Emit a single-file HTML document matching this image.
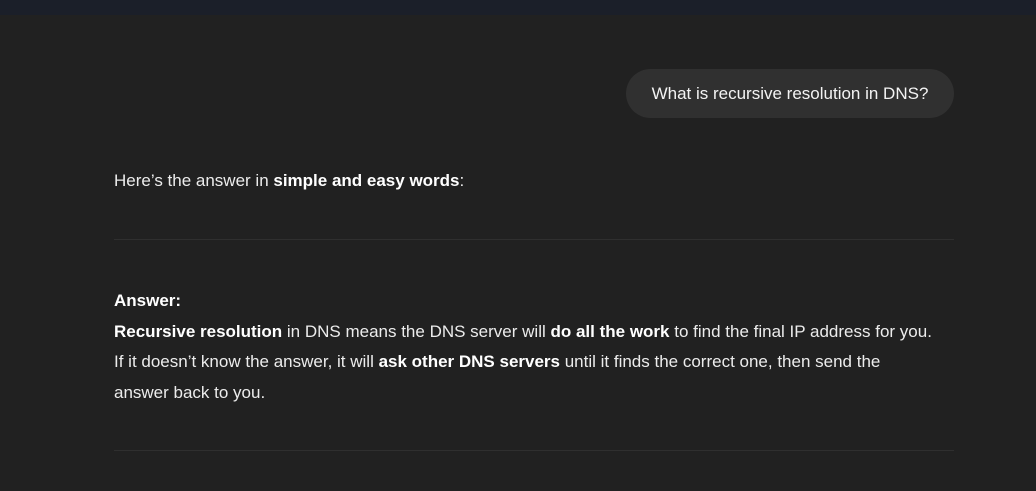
<!DOCTYPE html>
<html><head><style>
html,body{margin:0;padding:0;background:#212121;width:1036px;height:491px;overflow:hidden;font-family:"Liberation Sans",sans-serif;color:#ececec;}
.top{position:absolute;left:0;top:0;width:1036px;height:15px;background:#1b1f29;}
.bub{position:absolute;left:626px;top:69px;width:328px;height:49px;border-radius:25px;background:#303030;font-size:17px;line-height:49px;text-align:center;color:#f3f3f3;}
.t{position:absolute;left:114px;font-size:17px;white-space:nowrap;}
.hr{position:absolute;left:114px;width:840px;height:1px;background:#2f2f2f;}
b{font-weight:bold;color:#fff;}
</style></head><body>
<div class="top"></div>
<div class="bub">What is recursive resolution in DNS?</div>
<div class="t" style="top:171px;line-height:20px">Here’s the answer in <b>simple and easy words</b>:</div>
<div class="hr" style="top:239px"></div>
<div class="t" style="top:286px;line-height:30.5px"><b>Answer:</b><br><b>Recursive resolution</b> in DNS means the DNS server will <b>do all the work</b> to find the final IP address for you.<br>If it doesn’t know the answer, it will <b>ask other DNS servers</b> until it finds the correct one, then send the<br>answer back to you.</div>
<div class="hr" style="top:450px"></div>
</body></html>
